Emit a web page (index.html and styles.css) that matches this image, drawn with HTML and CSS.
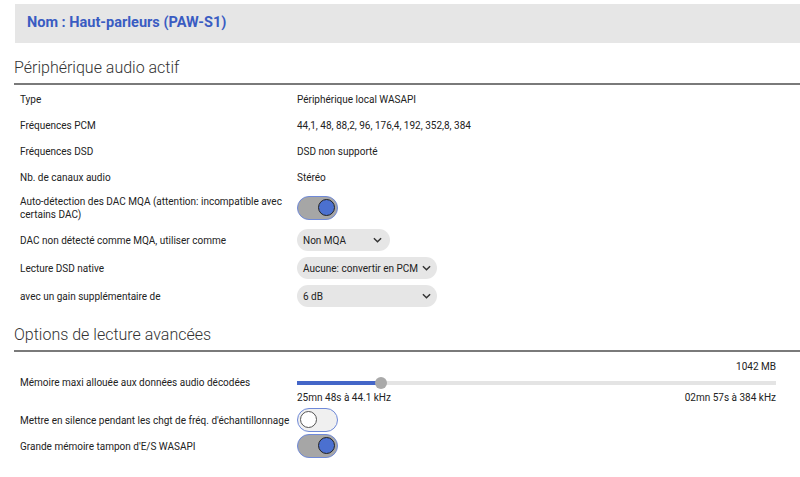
FILE: index.html
```html
<!DOCTYPE html>
<html>
<head>
  <title>Périphérique audio</title>
  <link rel="stylesheet" href="styles.css">
</head>
<body>
  <div class="page">
    <div class="device-header">Nom : Haut-parleurs (PAW-S1)</div>

    <h2 class="section-title">Périphérique audio actif</h2>
    <div class="settings">
      <div class="row"><div class="label">Type</div><div class="value">Périphérique local WASAPI</div></div>
      <div class="row"><div class="label">Fréquences PCM</div><div class="value">44,1, 48, 88,2, 96, 176,4, 192, 352,8, 384</div></div>
      <div class="row"><div class="label">Fréquences DSD</div><div class="value">DSD non supporté</div></div>
      <div class="row"><div class="label">Nb. de canaux audio</div><div class="value">Stéréo</div></div>
      <div class="row row-toggle">
        <div class="label wrap">Auto-détection des DAC MQA (attention: incompatible avec certains DAC)</div>
        <div class="value"><span class="toggle on"><span class="knob"></span></span></div>
      </div>
      <div class="row row-select">
        <div class="label">DAC non détecté comme MQA, utiliser comme</div>
        <div class="value">
          <div class="select narrow">Non MQA
            <svg class="chevron" viewBox="0 0 10 6" width="9" height="6"><path d="M1 1l4 4 4-4" fill="none" stroke="#333" stroke-width="1.6"/></svg>
          </div>
        </div>
      </div>
      <div class="row row-select">
        <div class="label">Lecture DSD native</div>
        <div class="value">
          <div class="select">Aucune: convertir en PCM
            <svg class="chevron" viewBox="0 0 10 6" width="9" height="6"><path d="M1 1l4 4 4-4" fill="none" stroke="#333" stroke-width="1.6"/></svg>
          </div>
        </div>
      </div>
      <div class="row row-select">
        <div class="label">avec un gain supplémentaire de</div>
        <div class="value">
          <div class="select">6 dB
            <svg class="chevron" viewBox="0 0 10 6" width="9" height="6"><path d="M1 1l4 4 4-4" fill="none" stroke="#333" stroke-width="1.6"/></svg>
          </div>
        </div>
      </div>
    </div>

    <h2 class="section-title">Options de lecture avancées</h2>
    <div class="settings">
      <div class="row row-slider">
        <div class="label">Mémoire maxi allouée aux données audio décodées</div>
        <div class="value slider-box">
          <div class="slider-top">1042 MB</div>
          <div class="slider">
            <div class="slider-fill" style="width: 17.5%"></div>
            <div class="slider-thumb" style="left: 17.5%"></div>
          </div>
          <div class="slider-bottom">
            <span>25mn 48s à 44.1 kHz</span>
            <span>02mn 57s à 384 kHz</span>
          </div>
        </div>
      </div>
      <div class="row row-compact">
        <div class="label">Mettre en silence pendant les chgt de fréq. d'échantillonnage</div>
        <div class="value"><span class="toggle"><span class="knob"></span></span></div>
      </div>
      <div class="row row-compact">
        <div class="label">Grande mémoire tampon d'E/S WASAPI</div>
        <div class="value"><span class="toggle on"><span class="knob"></span></span></div>
      </div>
    </div>
  </div>
</body>
</html>
```

FILE: styles.css
```css
body {
  margin: 0;
  background: #ffffff;
  font-family: "Roboto", "Open Sans", sans-serif;
  color: #222222;
}

.page {
  padding: 4px 0 0 14px;
}

.device-header {
  margin-left: 1px;
  height: 39px;
  line-height: 37px;
  padding-left: 12px;
  background: #e6e6e6;
  color: #3a5cc2;
  font-size: 14.5px;
  font-weight: bold;
}

.section-title {
  margin: 13px 0 0 0;
  padding-bottom: 3px;
  border-bottom: 2px solid #7a7a7a;
  font-size: 16px;
  font-weight: 300;
  line-height: 24px;
  color: #333333;
}

.settings {
  padding: 1px 24px 0 6px;
}

.row {
  display: grid;
  grid-template-columns: 277px 1fr;
  align-items: center;
  min-height: 26px;
  font-size: 10px;
}

.row-toggle {
  min-height: 36px;
}

.row-select {
  min-height: 28px;
}

.row-slider {
  min-height: 48px;
  margin-top: 5px;
}

.row-compact {
  min-height: 24px;
  margin-top: 2px;
}

.label {
  white-space: nowrap;
  line-height: 13px;
}

.label.wrap {
  white-space: normal;
  padding-right: 4px;
}

.toggle {
  display: inline-block;
  position: relative;
  width: 39px;
  height: 22px;
  border: 1px solid #6f89d8;
  border-radius: 12px;
  background: #f0f0f0;
  vertical-align: middle;
}

.toggle .knob {
  position: absolute;
  top: 2px;
  left: 2px;
  width: 15px;
  height: 15px;
  border: 1.5px solid #555555;
  border-radius: 50%;
  background: #ffffff;
}

.toggle.on {
  background: #a6a6a6;
}

.toggle.on .knob {
  left: auto;
  right: 2px;
  border-color: #222222;
  background: #4b70d0;
}

.select {
  display: inline-flex;
  align-items: center;
  justify-content: space-between;
  box-sizing: border-box;
  width: 140px;
  height: 22px;
  padding: 0 6px 0 6px;
  border-radius: 11px;
  background: #e6e6e6;
  font-size: 10px;
  white-space: nowrap;
}

.select.narrow {
  width: 93px;
  padding-right: 8px;
}

.chevron {
  flex: none;
  margin-left: 3px;
}

.slider-box {
  display: flex;
  flex-direction: column;
}

.slider-top {
  text-align: right;
  line-height: 14px;
  margin-bottom: 3px;
}

.slider {
  position: relative;
  height: 4px;
  margin: 4px 0 6px 0;
  background: #e4e4e4;
}

.slider-fill {
  height: 100%;
  background: #4466c8;
}

.slider-thumb {
  position: absolute;
  top: -4px;
  width: 12px;
  height: 12px;
  margin-left: -6px;
  border-radius: 50%;
  background: #a9a9a9;
}

.slider-bottom {
  display: flex;
  justify-content: space-between;
  line-height: 14px;
}
```
